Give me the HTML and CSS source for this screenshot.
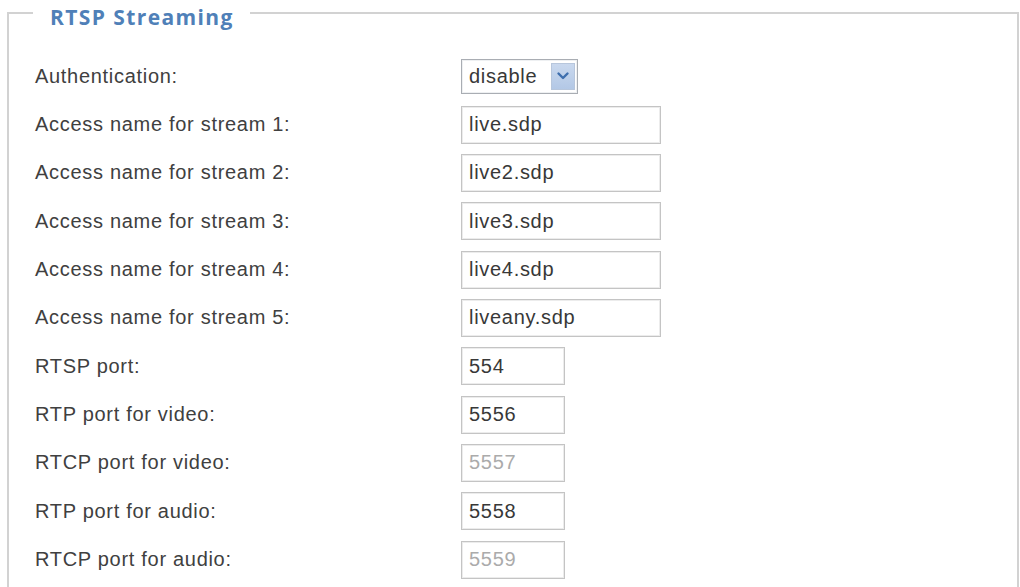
FILE: index.html
```html
<!DOCTYPE html>
<html>
<head>
<meta charset="utf-8">
<link rel="stylesheet" href="styles.css">
</head>
<body>
<fieldset class="panel">
  <legend class="panel-title">RTSP Streaming</legend>
  <div class="form">
    <div class="label">Authentication:</div>
    <div class="field">
      <div class="select">
        <span class="select-value">disable</span>
        <span class="select-btn"><svg width="14" height="10" viewBox="0 0 14 10"><path d="M2.5 2.5 L7 7 L11.5 2.5" fill="none" stroke="#3f6fae" stroke-width="2.4" stroke-linecap="round" stroke-linejoin="round"/></svg></span>
      </div>
    </div>

    <div class="label">Access name for stream 1:</div>
    <div class="field"><div class="input wide">live.sdp</div></div>

    <div class="label">Access name for stream 2:</div>
    <div class="field"><div class="input wide">live2.sdp</div></div>

    <div class="label">Access name for stream 3:</div>
    <div class="field"><div class="input wide">live3.sdp</div></div>

    <div class="label">Access name for stream 4:</div>
    <div class="field"><div class="input wide">live4.sdp</div></div>

    <div class="label">Access name for stream 5:</div>
    <div class="field"><div class="input wide">liveany.sdp</div></div>

    <div class="label">RTSP port:</div>
    <div class="field"><div class="input short">554</div></div>

    <div class="label">RTP port for video:</div>
    <div class="field"><div class="input short">5556</div></div>

    <div class="label">RTCP port for video:</div>
    <div class="field"><div class="input short disabled">5557</div></div>

    <div class="label">RTP port for audio:</div>
    <div class="field"><div class="input short">5558</div></div>

    <div class="label">RTCP port for audio:</div>
    <div class="field"><div class="input short disabled">5559</div></div>
  </div>
</fieldset>
</body>
</html>
```

FILE: styles.css
```css
html, body {
  margin: 0;
  padding: 0;
  background: #ffffff;
  overflow: hidden;
}

body {
  font-family: "Liberation Sans", Arial, sans-serif;
  color: #383838;
  height: 587px;
}

.panel {
  margin: 0 1px 0 7px;
  padding: 26px 0 0 26px;
  border: 2px solid #d2d2d2;
  border-bottom: none;
  height: 587px;
  box-sizing: border-box;
}

.panel-title {
  margin-left: -2px;
  padding: 8px 16px 0 17px;
  height: 26px;
  box-sizing: border-box;
  line-height: 18px;
  font-family: "Open Sans", "Liberation Sans", sans-serif;
  font-weight: 700;
  font-size: 21px;
  color: #4f80b8;
  letter-spacing: 1.4px;
}

.form {
  display: grid;
  grid-template-columns: 426px auto;
  grid-auto-rows: 48.35px;
  align-items: center;
}

.label {
  font-size: 20px;
  letter-spacing: 0.7px;
  color: #404040;
  white-space: nowrap;
}

.field {
  display: flex;
  align-items: center;
}

.input {
  height: 38px;
  box-sizing: border-box;
  border: 1px solid #c4c4c4;
  box-shadow: inset 0 0 0 1px #ececec;
  padding-left: 7px;
  display: flex;
  align-items: center;
  font-size: 20px;
  letter-spacing: 0.7px;
  color: #383838;
  background: #ffffff;
}

.input.wide { width: 200px; }
.input.short { width: 104px; }
.input.disabled { color: #ababab; }

.select {
  width: 117px;
  height: 35px;
  box-sizing: border-box;
  border: 1px solid #a9adb3;
  box-shadow: inset 0 0 0 1px #eef0f2;
  display: flex;
  align-items: center;
  justify-content: space-between;
  padding: 2px 2px 2px 7px;
  font-size: 20px;
  letter-spacing: 0.7px;
  color: #383838;
}

.select-btn {
  width: 24px;
  height: 27px;
  background: linear-gradient(#c9d8ee, #b3c8e6);
  border: 1px solid #b7c6dc;
  box-sizing: border-box;
  display: flex;
  align-items: center;
  justify-content: center;
}
```
